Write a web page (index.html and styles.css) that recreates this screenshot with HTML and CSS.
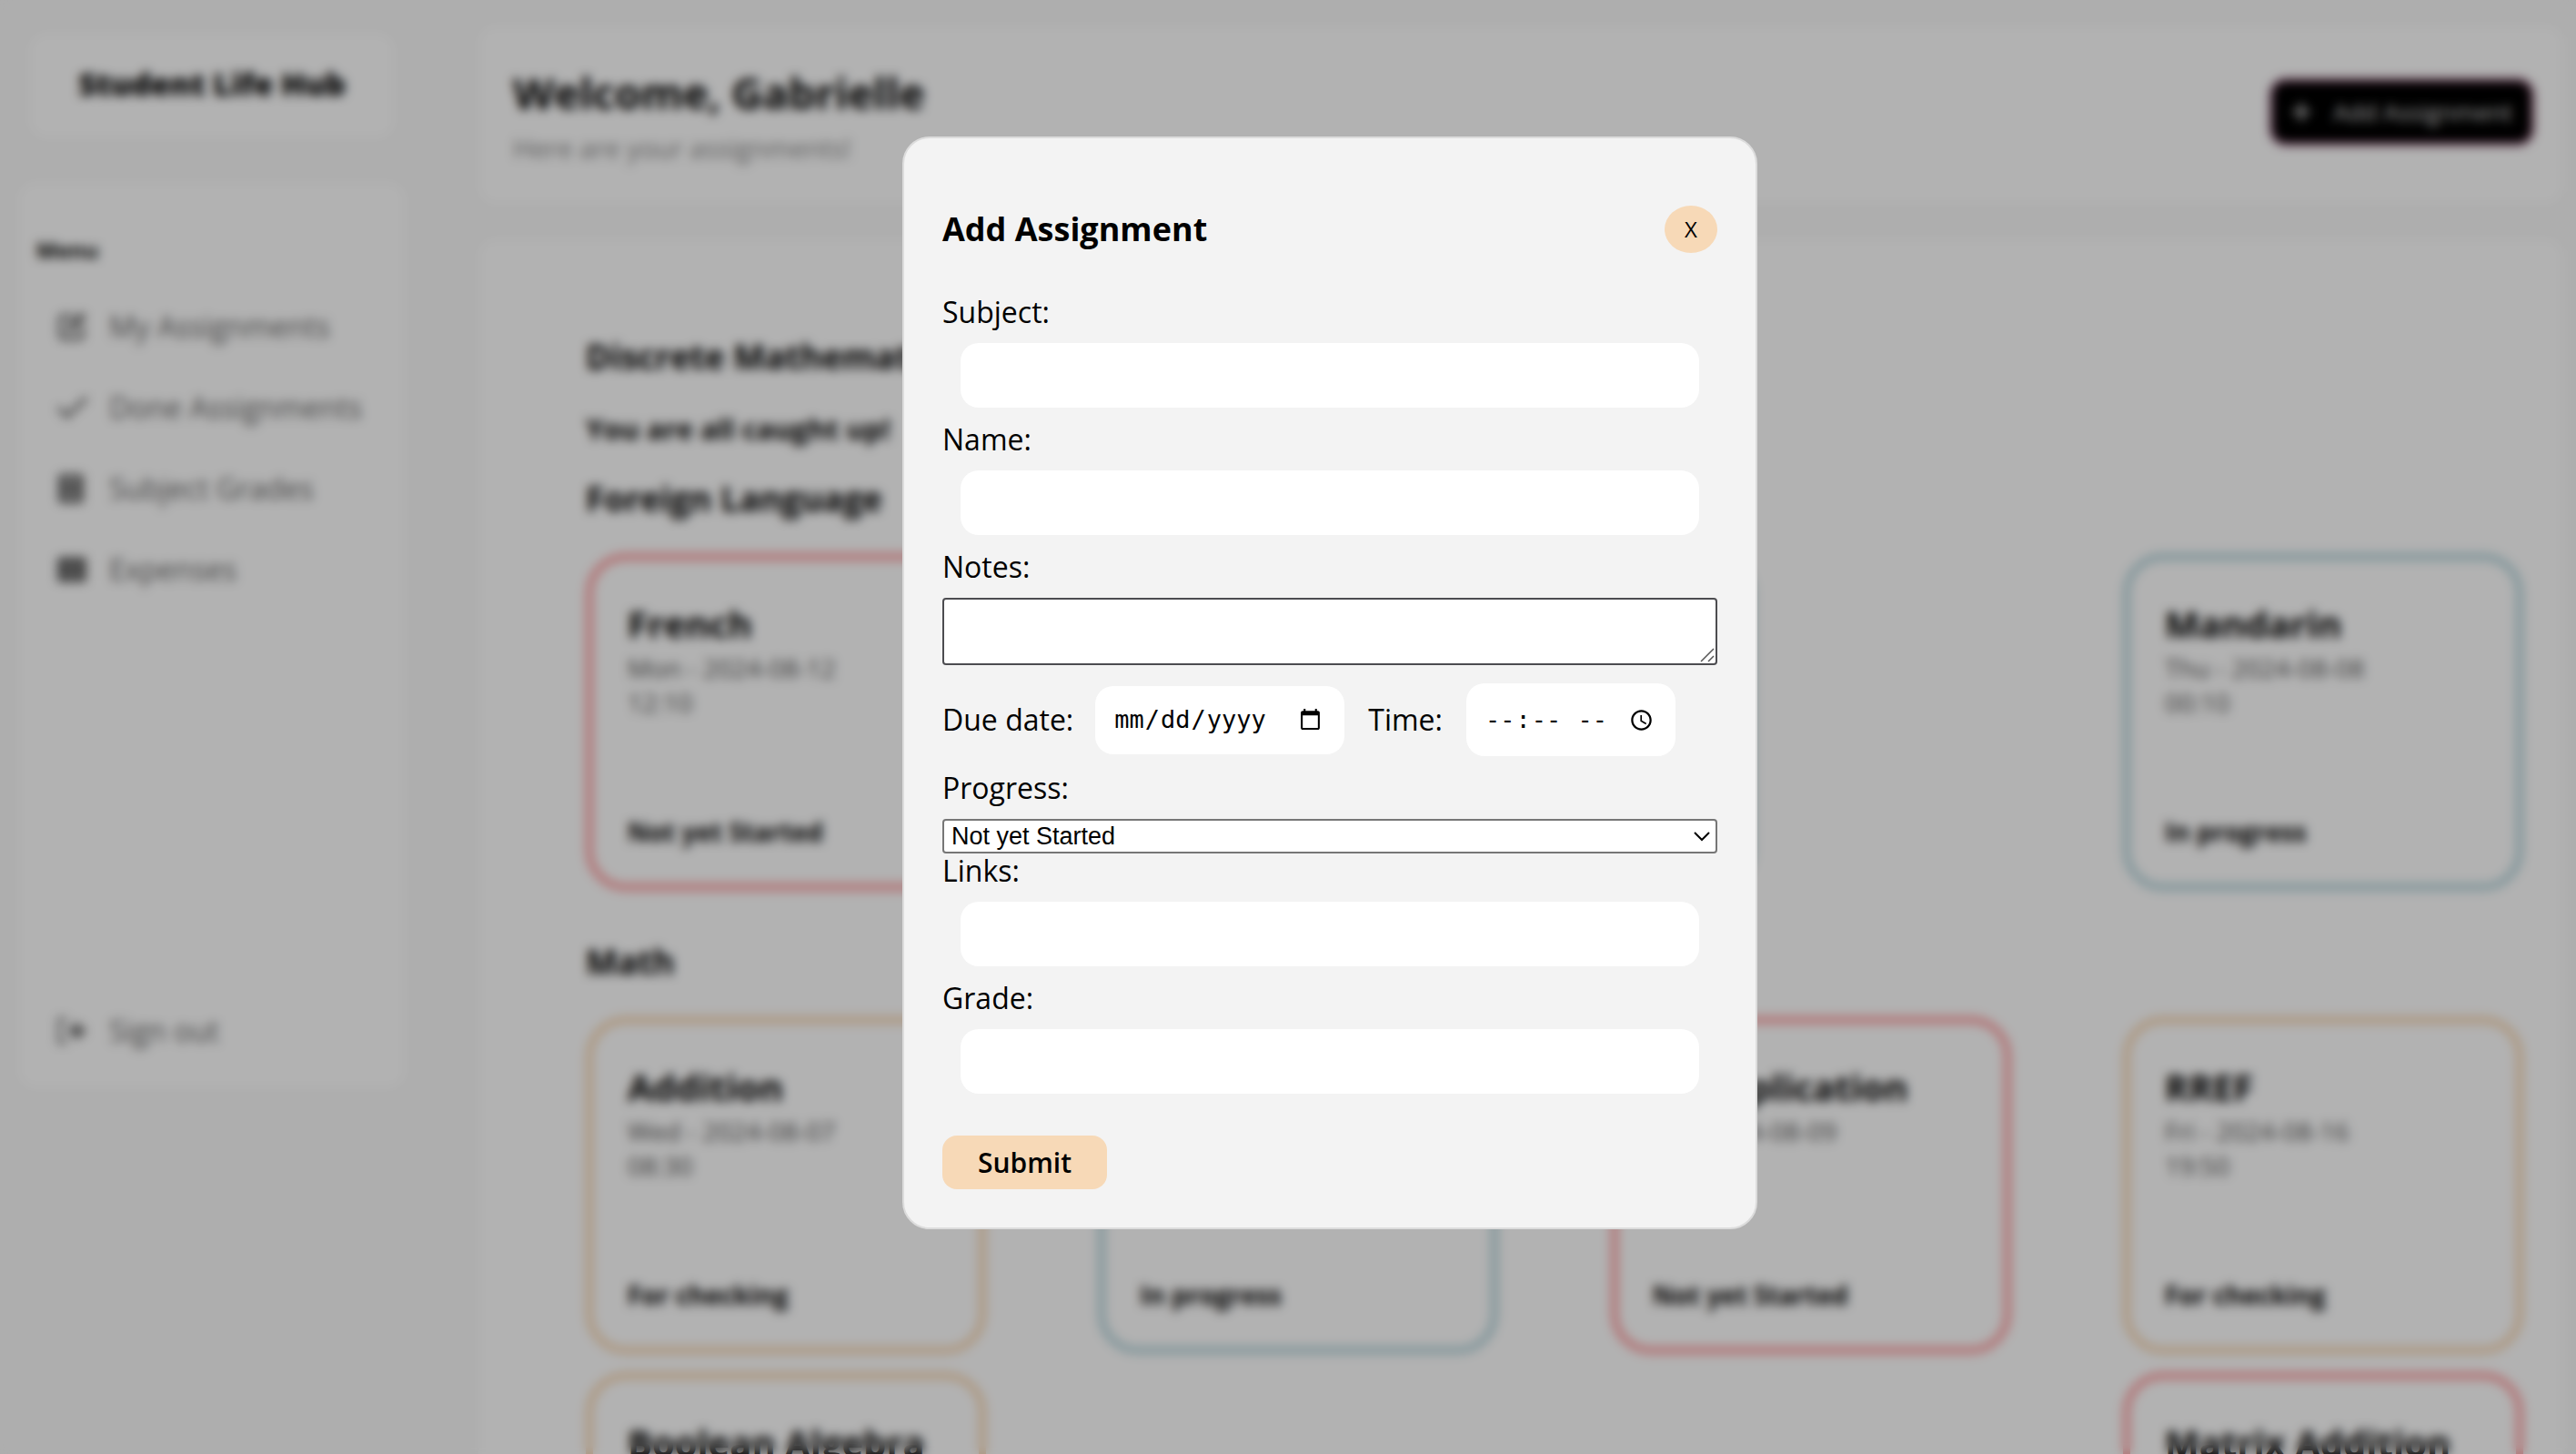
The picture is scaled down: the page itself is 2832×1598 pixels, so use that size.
FILE: index.html
```html
<!DOCTYPE html>
<html lang="en">
<head>
<meta charset="utf-8">
<meta name="viewport" content="width=device-width, initial-scale=1">
<title>Student Life Hub</title>
<link rel="stylesheet" href="styles.css">
</head>
<body>
<div class="app">
  <aside class="sidebar">
    <div class="brand">Student Life Hub</div>
    <nav class="menu">
      <h2 class="menu-title">Menu</h2>
      <a class="menu-link" href="#">
        <svg class="icon" viewBox="0 0 32 32" fill="none" stroke="currentColor" stroke-width="4"><path d="M17 5H7a3 3 0 0 0-3 3v17a3 3 0 0 0 3 3h17a3 3 0 0 0 3-3V16"/><path d="M11 22l1-7L26 1l5 5-14 14z" fill="currentColor" stroke="none"/></svg>
        My Assignments
      </a>
      <a class="menu-link" href="#">
        <svg class="icon" viewBox="0 0 32 32" fill="none" stroke="currentColor" stroke-width="4" stroke-linecap="round"><path d="M3 17l8 8L30 7"/></svg>
        Done Assignments
      </a>
      <a class="menu-link" href="#">
        <svg class="icon" viewBox="0 0 32 32"><path fill="currentColor" fill-rule="evenodd" d="M5 1h20a3 3 0 0 1 3 3v24a3 3 0 0 1-3 3H5a3 3 0 0 1-3-3V4a3 3 0 0 1 3-3zm3 6v3h14V7zm0 14v3h14v-3z"/></svg>
        Subject Grades
      </a>
      <a class="menu-link" href="#">
        <svg class="icon" viewBox="0 0 32 32"><path fill="currentColor" fill-rule="evenodd" d="M4 3h24a3 3 0 0 1 3 3v20a3 3 0 0 1-3 3H4a3 3 0 0 1-3-3V6a3 3 0 0 1 3-3zm11 7v4h2v-4zm0 9v4h2v-4z"/></svg>
        Expenses
      </a>
      <a class="menu-link menu-signout" href="#">
        <svg class="icon" viewBox="0 0 32 32"><path fill="none" stroke="currentColor" stroke-width="3" d="M11 4H3v24h8"/><path fill="currentColor" d="M12 13h7V6l12 10-12 10v-7h-7z"/></svg>
        Sign out
      </a>
    </nav>
  </aside>
  <main class="main">
    <header class="panel topbar">
      <div>
        <h1 class="welcome">Welcome, Gabrielle</h1>
        <p class="lead">Here are your assignments!</p>
      </div>
      <button class="add-button" type="button">
        <svg class="plus" viewBox="0 0 20 20" stroke="currentColor" stroke-width="3"><path d="M10 1v18M1 10h18"/></svg>
        Add Assignment
      </button>
    </header>
    <section class="panel content">
      <h2 class="subject">Discrete Mathematics</h2>
      <p class="caught-up">You are all caught up!</p>
      <h2 class="subject">Foreign Language</h2>
      <div class="cards">
        <article class="card red"><h3>French</h3><p>Mon - 2024-08-12</p><p>12:10</p><strong>Not yet Started</strong></article>
        <article class="card blue"></article>
        <article class="card blue"><h3>Mandarin</h3><p>Thu - 2024-08-08</p><p>00:10</p><strong>In progress</strong></article>
      </div>
      <h2 class="subject">Math</h2>
      <div class="cards">
        <article class="card tan"><h3>Addition</h3><p>Wed - 2024-08-07</p><p>08:30</p><strong>For checking</strong></article>
        <article class="card blue"><strong>In progress</strong></article>
        <article class="card red"><h3>Multiplication</h3><p>Fri - 2024-08-09</p><strong>Not yet Started</strong></article>
        <article class="card tan"><h3>RREF</h3><p>Fri - 2024-08-16</p><p>19:50</p><strong>For checking</strong></article>
        <article class="card tan"><h3>Boolean Algebra</h3></article>
        <article class="card red"><h3>Matrix Addition</h3></article>
      </div>
    </section>
  </main>
</div>

<div class="overlay">
  <form class="modal" role="dialog" aria-labelledby="modal-title">
    <div class="modal-head">
      <h2 id="modal-title">Add Assignment</h2>
      <button class="close" type="button" aria-label="Close">X</button>
    </div>
    <label for="subject">Subject:</label>
    <input class="field" id="subject" type="text">
    <label for="name">Name:</label>
    <input class="field" id="name" type="text">
    <label for="notes">Notes:</label>
    <div class="notes-wrap">
      <textarea class="notes" id="notes"></textarea>
      <svg class="grip" viewBox="0 0 16 16" fill="none" stroke="#555" stroke-width="1.5"><path d="M1 15L15 1M9 15l6-6"/></svg>
    </div>
    <div class="due">
      <label for="date">Due date:</label>
      <input class="picker date" id="date" type="date">
      <label for="time">Time:</label>
      <input class="picker time" id="time" type="time">
    </div>
    <label for="progress">Progress:</label>
    <div class="select-wrap">
      <select id="progress"><option>Not yet Started</option><option>In progress</option><option>For checking</option></select>
      <svg class="chevron" viewBox="0 0 18 12" fill="none" stroke="#000" stroke-width="2"><path d="M1 2l8 8 8-8"/></svg>
    </div>
    <label for="links">Links:</label>
    <input class="field" id="links" type="text">
    <label for="grade">Grade:</label>
    <input class="field" id="grade" type="text">
    <button class="submit" type="submit">Submit</button>
  </form>
</div>
</body>
</html>
```
FILE: styles.css
```css
* { box-sizing: border-box; }

body {
  margin: 0;
  background: #f9f9f9;
  color: #000;
  font-family: "Open Sans", "Noto Sans", sans-serif;
  font-size: 32px;
  line-height: 38px;
}

h1, h2, h3, p { margin: 0; }

button, input, select, textarea { font: inherit; color: inherit; }

.app {
  display: flex;
  gap: 80px;
  height: 100vh;
  padding: 28px 14px 0 20px;
  overflow: hidden;
}

/* Sidebar */
.sidebar {
  flex: none;
  width: 426px;
  padding-top: 8px;
}

.brand {
  margin: 0 12px 48px;
  padding: 38px 0 42px;
  border-radius: 20px;
  background: #fff;
  text-align: center;
  font-size: 34px;
  line-height: 36px;
  font-weight: 800;
}

.menu {
  display: flex;
  flex-direction: column;
  height: 996px;
  padding: 56px 20px 44px;
  border-radius: 20px;
  background: #fff;
}

.menu-title {
  margin-bottom: 46px;
  font-size: 24px;
  line-height: 38px;
}

.menu-link {
  display: flex;
  align-items: center;
  gap: 24px;
  margin-bottom: 51px;
  padding-left: 22px;
  color: #666;
  text-decoration: none;
  white-space: nowrap;
}

.menu-signout { margin: auto 0 0; }

.icon { width: 34px; height: 34px; }

/* Main column */
.main {
  flex: 1;
  min-width: 0;
}

.panel {
  border-radius: 20px;
  background: #fff;
}

.topbar {
  display: flex;
  justify-content: space-between;
  align-items: flex-start;
  margin-bottom: 38px;
  padding: 42px 32px 42px 38px;
}

.welcome {
  margin-bottom: 10px;
  font-size: 47px;
  line-height: 64px;
}

.lead {
  color: #888;
  font-size: 29px;
}

.add-button {
  display: flex;
  align-items: center;
  gap: 24px;
  margin-top: 16px;
  padding: 14px 20px;
  border: 4px solid #8a4a6c;
  border-radius: 18px;
  background: #000;
  color: #ddd;
  font-size: 26px;
  font-weight: 500;
}

.plus { width: 22px; height: 22px; }

.content {
  min-height: 1600px;
  padding: 108px 44px 0 118px;
}

.subject {
  margin-bottom: 38px;
  font-size: 37px;
  line-height: 44px;
}

.caught-up {
  margin-bottom: 36px;
  font-size: 31px;
  font-weight: 700;
}

.cards {
  display: flex;
  flex-wrap: wrap;
  justify-content: space-between;
  row-gap: 20px;
  margin-bottom: 56px;
}

.card {
  display: flex;
  flex-direction: column;
  width: 440px;
  height: 371px;
  padding: 45px 38px 38px;
  border: 8px solid;
  border-radius: 44px;
}

.card h3 {
  margin-bottom: 4px;
  font-size: 40px;
  line-height: 50px;
  white-space: nowrap;
}

.card p {
  color: #555;
  font-size: 28px;
}

.card strong {
  margin-top: auto;
  font-size: 28px;
}

.red { border-color: #ffa3a5; }
.blue { border-color: #b9d7de; }
.tan { border-color: #f8d8b6; }

/* Dialog */
.overlay {
  position: fixed;
  inset: 0;
  display: flex;
  justify-content: center;
  align-items: flex-start;
  padding: 150px 0 0 92px;
  background: rgba(0, 0, 0, 0.3);
  backdrop-filter: blur(6px);
}

.modal {
  display: flex;
  flex-direction: column;
  width: 940px;
  padding: 74px 42px 42px;
  border: 2px solid #dcdcdc;
  border-radius: 30px;
  background: #f3f3f3;
}

.modal-head {
  display: flex;
  justify-content: space-between;
  align-items: center;
  margin-bottom: 46px;
}

.modal-head h2 { font-size: 36px; }

.close {
  width: 58px;
  height: 52px;
  padding: 0;
  border: 0;
  border-radius: 50%;
  background: #f7d9b7;
  font-size: 24px;
}

.field {
  height: 71px;
  margin: 15px 20px 16px;
  padding: 0 20px;
  border: 0;
  border-radius: 20px;
  background: #fff;
}

.notes-wrap {
  position: relative;
  display: flex;
  margin: 15px 0 20px;
}

.notes {
  flex: 1;
  height: 74px;
  border: 2px solid #4c4c50;
  border-radius: 4px;
  background: #fff;
}

.notes::-webkit-resizer { display: none; }

.grip {
  position: absolute;
  right: 3px;
  bottom: 3px;
  width: 16px;
  height: 16px;
  pointer-events: none;
}

.due {
  display: flex;
  align-items: center;
  margin-bottom: 16px;
}

.picker {
  border: 0;
  border-radius: 20px;
  background: #fff;
  font-family: "DejaVu Sans Mono", monospace;
  font-size: 27px;
}

.picker::-webkit-calendar-picker-indicator {
  width: 27px;
  height: 27px;
  padding: 0;
}

.date {
  width: 274px;
  height: 75px;
  margin: 0 26px 0 24px;
  padding: 0 24px 0 20px;
}

.time {
  width: 230px;
  height: 80px;
  margin-left: 26px;
  padding: 0 24px 0 20px;
}

.select-wrap {
  position: relative;
  display: flex;
  margin-top: 15px;
}

.select-wrap select {
  flex: 1;
  height: 38px;
  padding: 0 8px;
  border: 2px solid #767676;
  border-radius: 4px;
  background: #fff;
  appearance: none;
  font-family: "Liberation Sans", Arial, sans-serif;
  font-size: 27px;
  line-height: 32px;
}

.chevron {
  position: absolute;
  top: 13px;
  right: 8px;
  width: 18px;
  height: 12px;
  pointer-events: none;
}

.submit {
  align-self: flex-start;
  width: 181px;
  height: 59px;
  margin-top: 30px;
  padding: 0;
  border: 0;
  border-radius: 16px;
  background: #f7d9b7;
  font-size: 30px;
  font-weight: 600;
}
```
